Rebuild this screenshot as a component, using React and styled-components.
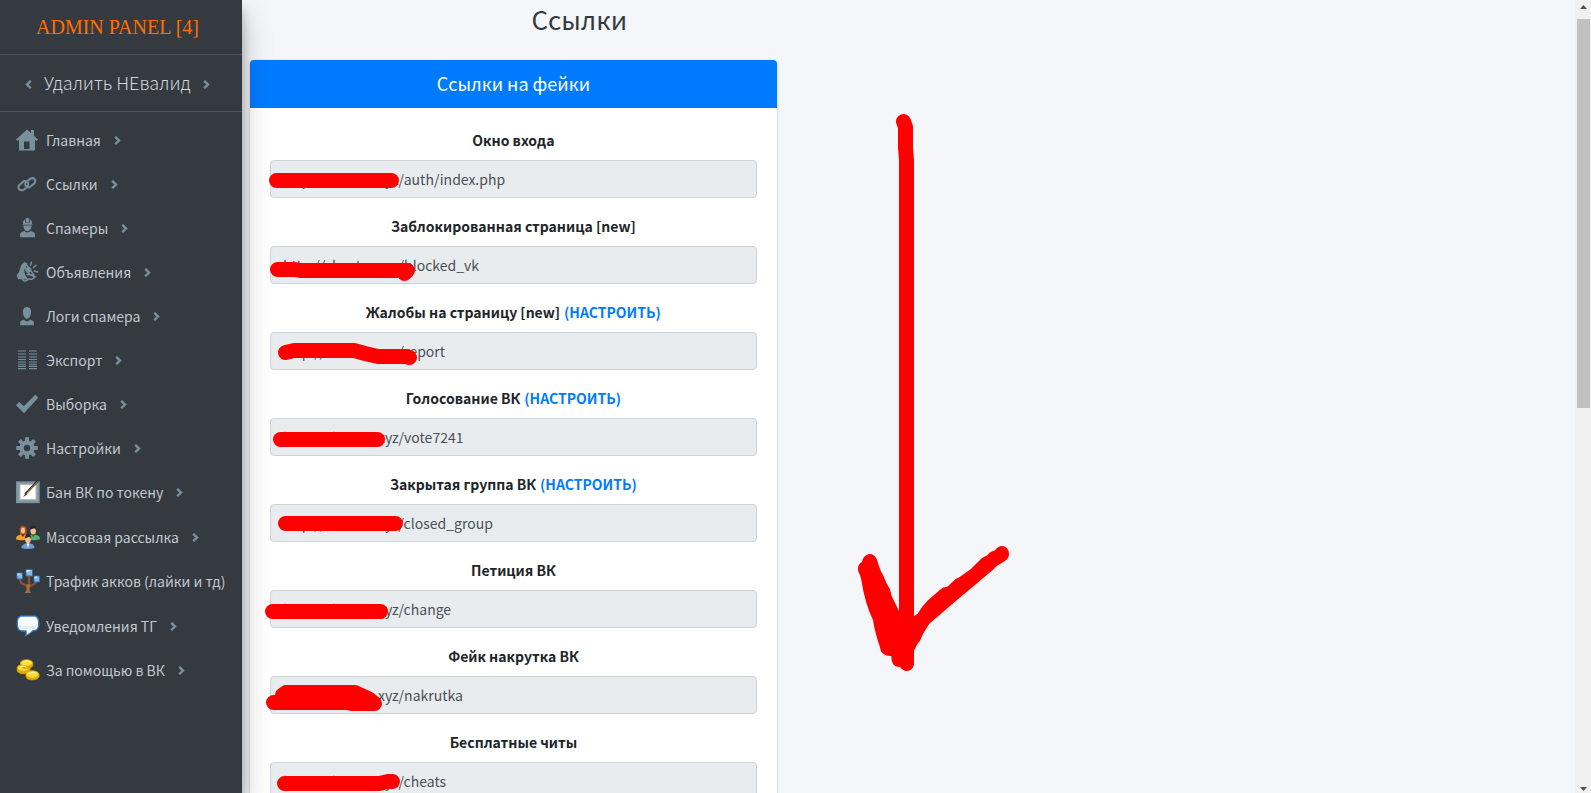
import React from 'react';
import styled, { createGlobalStyle } from 'styled-components';

const GlobalStyle = createGlobalStyle`
    * {
        box-sizing: border-box;
    }

    body {
        margin: 0;
        background-color: #f4f6f9;
        font-family: 'Noto Sans CJK SC', 'Open Sans', sans-serif;
        font-size: 14px;
        color: #212529;
    }
`;

const Page = styled.div`
    display: flex;
    height: 100vh;
    overflow: hidden;
    position: relative;
`;

const Sidebar = styled.aside`
    flex: 0 0 242px;
    background-color: #343a40;
    box-shadow: 0 14px 28px rgba(0,0,0,0.25), 0 10px 10px rgba(0,0,0,0.22);
    z-index: 2;
`;

const Brand = styled.a`
    display: flex;
    align-items: center;
    height: 55px;
    padding-left: 36px;
    border-bottom: 1px solid #4b545c;
    font-family: 'Liberation Serif', serif;
    font-size: 20px;
    color: #ff6f00;
    text-decoration: none;
`;

const CleanLink = styled.a`
    display: flex;
    align-items: center;
    gap: 12px;
    height: 57px;
    padding: 0 0 2px 25px;
    border-bottom: 1px solid #4b545c;
    font-size: 18px;
    font-weight: 300;
    color: #d0d4db;
    text-decoration: none;

    svg {
        margin-top: 4px;
    }
`;

const Menu = styled.ul`
    list-style: none;
    margin: 0;
    padding: 6px 0 0 16px;
`;

const MenuItem = styled.li`
    height: 44px;

    &:nth-child(n + 9):nth-child(odd) {
        height: 45px;
    }
`;

const MenuLink = styled.a`
    display: flex;
    align-items: center;
    height: 44px;
    color: #c2c7d0;
    text-decoration: none;
    white-space: nowrap;

    > svg:first-child {
        flex: none;
        width: ${props => props.$large ? '24px' : '22px'};
        height: ${props => props.$large ? '24px' : '22px'};
        margin-right: ${props => props.$large ? '6px' : '8px'};
    }
`;

const MenuText = styled.span`
    margin-right: 13px;
`;

const Chevron = styled.svg`
    flex: none;
    width: 7px;
    height: 9px;
    fill: none;
    stroke: #78909c;
    stroke-width: 2.4;
`;

const Content = styled.main`
    flex: 1;
    min-width: 0;
    padding: 0 8px;
`;

const Title = styled.h1`
    width: 50%;
    height: 60px;
    margin: 0;
    line-height: 38px;
    font-size: 26px;
    font-weight: 400;
    text-align: center;
    color: #343a40;
`;

const Card = styled.section`
    width: 40%;
    background-color: white;
    border-radius: 4px;
    box-shadow: 0 0 1px rgba(0,0,0,0.125), 0 1px 3px rgba(0,0,0,0.2);
`;

const CardHeader = styled.h2`
    margin: 0;
    height: 48px;
    line-height: 46px;
    border-radius: 4px 4px 0 0;
    background-color: #007bff;
    color: white;
    font-size: 18px;
    font-weight: 400;
    text-align: center;
`;

const CardBody = styled.form`
    padding: 20px;
`;

const Group = styled.div`
    margin-bottom: 16px;
`;

const GroupTitle = styled.div`
    display: flex;
    justify-content: center;
    gap: 4px;
    margin-bottom: 8px;
    line-height: 24px;
    font-weight: 700;

    a {
        color: #007bff;
        text-decoration: none;
    }
`;

const Field = styled.div`
    position: relative;
    height: 38px;
`;

const Input = styled.input`
    display: block;
    width: 100%;
    height: 38px;
    padding: 6px 12px;
    border: 1px solid #ced4da;
    border-radius: 4px;
    background-color: #e9ecef;
    color: #495057;
    font-family: inherit;
    font-size: 14px;
    outline: none;
`;

const Marker = styled.svg`
    position: absolute;
    top: 0;
    left: 0;
    overflow: visible;
    pointer-events: none;
    fill: none;
    stroke: #f00;
    stroke-width: 15;
    stroke-linecap: round;
    stroke-linejoin: round;
    z-index: 3;
`;

const ScrollTrack = styled.div`
    display: flex;
    flex-direction: column;
    justify-content: space-between;
    align-items: center;
    flex: 0 0 16px;
    background-color: #f1f1f1;

    svg {
        flex: none;
        display: block;
        width: 16px;
        height: 19px;
        fill: #505050;
    }
`;

const ScrollThumb = styled.div`
    width: 13px;
    height: 49%;
    margin-bottom: auto;
    background-color: #c1c1c1;
`;

const Right = () => (
    <Chevron viewBox="0 0 7 9"><path d="M1.2 .8L5 4.5L1.2 8.2" /></Chevron>
);

const Left = () => (
    <Chevron viewBox="0 0 7 9"><path d="M5.8 .8L2 4.5L5.8 8.2" /></Chevron>
);

const HomeIcon = () => (
    <svg viewBox="0 0 22 22" fill="#78909c">
        <path fillRule="evenodd" d="M11 .5L0 10.5L1.3 12L3 10.8V21.5H19V10.8L20.7 12L22 10.5L18 6.7V1H15V4ZM8 12.5H13.5V20H8Z" />
    </svg>
);

const LinkIcon = () => (
    <svg viewBox="0 0 22 22" fill="none" stroke="#78909c" strokeWidth="2" strokeLinecap="round">
        <path d="M10 15L7.8 16.6C4 18.8 .8 15 3.2 12.2L6.8 8.9C9.2 7 12.3 8.6 12.3 11.3C12.3 12.4 11.6 13.2 10.8 13.6" />
        <path d="M11.8 7.6L14.2 5.9C17.8 3.7 20.8 7.4 18.4 10.2L14.6 13.5C12.2 15.4 9 13.8 9.1 11.1C9.1 10 9.8 9.2 10.7 8.8" />
    </svg>
);

const WorkerIcon = () => (
    <svg viewBox="0 0 22 22" fill="#78909c">
        <path d="M9.8 1.5L11.5 .8L13.2 1.5V5H9.8ZM9 2.2V5.5H14V2.2C15.6 3.3 16.2 5 16 7H7C6.8 5 7.4 3.3 9 2.2ZM6.5 7.3H16.5V8.2H6.5ZM7.5 8.8H15.5C15.5 11.5 14 14.2 11.5 14.2S7.5 11.5 7.5 8.8ZM4 20.2V17.5C4 15.5 6 14.8 8.5 14C9.8 15.8 13.2 15.8 14.5 14C17 14.8 19 15.5 19 17.5V20.2Z" />
    </svg>
);

const BellIcon = () => (
    <svg viewBox="0 0 22 22" fill="none" stroke="#78909c" strokeWidth="1.4" strokeLinecap="round">
        <path fill="#78909c" d="M8.2 2C3.5 5 5.5 11.5 1.5 14.2L2.5 17.5L10 16.2C6.5 11.5 7.2 6.5 10.5 3Z" />
        <path d="M9.5 2.3C8.3 7.5 11 13.5 19 16L16 18.2L2.5 17.3M10 3L18.8 15.5M6.3 18.5C7.5 20.5 10.5 20.5 12 18.6" />
        <circle cx="12.5" cy="8.8" r="2.2" fill="#78909c" />
        <path d="M14.5 4.2L15.4 1.2M17.3 6.5L20 4.3M18.2 10L21.5 11" />
        <path d="M11 13.5L17.5 14.2" />
    </svg>
);

const UserIcon = () => (
    <svg viewBox="0 0 22 22" fill="#78909c">
        <path d="M11 2C14.5 2 15.3 5 15 8C14.7 11 13 13.8 11 13.8S7.3 11 7 8C6.7 5 7.5 2 11 2ZM4.2 20.3V17.8C4.2 15.5 6.3 15.5 8.2 14.5C9.6 17 12.4 17 13.8 14.5C15.7 15.5 17.9 15.5 17.9 17.8V20.3Z" />
    </svg>
);

const ColumnsIcon = () => (
    <svg viewBox="0 0 22 22" stroke="#78909c" strokeWidth="1.1">
        <path d="M2 2H10M2 5H10M2 8H10M2 10.5H10M2 13H10M2 15.2H10M2 17.4H10M2 19.6H10M13 2H21M13 5H21M13 8H21M13 10.5H21M13 13H21M13 15.2H21M13 17.4H21M13 19.6H21" />
    </svg>
);

const CheckIcon = () => (
    <svg viewBox="0 0 22 22" fill="#78909c">
        <path d="M0 12.2L3.2 9L7.8 13.2L19.2 1.8L22.2 4.8L8 20.2Z" />
    </svg>
);

const GearIcon = () => (
    <svg viewBox="0 0 22 22" fill="none" stroke="#78909c">
        <circle cx="11" cy="11" r="5.4" strokeWidth="4.4" />
        <path strokeWidth="4" d="M11 4V.3M11 18V21.7M4 11H.3M18 11H21.7M6 6L3.4 3.4M16 16L18.6 18.6M6 16L3.4 18.6M16 6L18.6 3.4" />
    </svg>
);

const TokenIcon = () => (
    <svg viewBox="0 0 24 24">
        <rect x=".7" y="2" width="22.3" height="20.5" fill="#8d9a9e" stroke="#6f91a6" strokeWidth="1.4" />
        <rect x="4" y="4.5" width="16" height="15" fill="#fff" stroke="#b9b9b9" />
        <path d="M21.8 1L9.2 14.2" stroke="#1c160d" strokeWidth="2" />
        <path d="M22 1.2L10 13.8" stroke="#d8a93b" strokeWidth=".9" />
        <path d="M10 12.6L7 17L11.3 14.5Z" fill="#54452c" />
    </svg>
);

const PeopleIcon = () => (
    <svg viewBox="0 0 24 24">
        <path d="M4 8C3 3 4 .8 7 .8S11 3 10.5 9L4 10Z" fill="#b75319" />
        <ellipse cx="7" cy="5.5" rx="2" ry="3" fill="#f5c28c" />
        <path d="M0 14.2C0 10.5 3 10.3 5 9.5L7 12L9 9.5C12 10 13 11.5 13 14.5C9 15.6 3 15.5 0 14.2Z" fill="#f0a51e" />
        <ellipse cx="17.2" cy="5.5" rx="2.8" ry="4" fill="#f3bf8d" />
        <path d="M14.2 4.5C14 1 16 .6 17.4 .8C20 .6 20.5 2.5 20.2 5L18.5 3.2Z" fill="#28221e" />
        <path d="M11.8 14.5C11.8 11 14.5 10.3 16 9.5L17.3 12L18.8 9.5C22 10.5 24 11 24 14.2C20 15.5 15 15.5 11.8 14.5Z" fill="#55b275" />
        <ellipse cx="12" cy="14.3" rx="2.8" ry="4" fill="#f6c08c" />
        <path d="M9 13.5C8.7 9.8 11 9.5 12 9.6C14.8 9.4 15.3 11.8 14.9 13.8L13.2 11.8Z" fill="#30251b" />
        <path d="M5.5 23C5.5 19.7 8.4 19 10.5 18.3L12 20.8L13.6 18.3C16.5 19 18.5 20 18.5 23C14 24.2 9 24.2 5.5 23Z" fill="#6f9ed5" />
        <path d="M10.5 18.3L12 23L13.5 18.3Z" fill="#fff" />
    </svg>
);

const TreeIcon = () => (
    <svg viewBox="0 0 24 24">
        <path d="M12 24V15M4 9C4 15 7 15.5 11.5 16.5M20 11.5C20 16 16 15.8 12.5 18M13 6V16" fill="none" stroke="#885436" strokeWidth="2.2" />
        <path d="M10.2 16L10.5 21L8.8 24H15L13.6 21L14.2 15Z" fill="#a96b43" />
        <path d="M1 4H6.5V10H1ZM10 .5H16.5V7H10ZM18 7H23.5V13H18Z" fill="#7eb9e8" stroke="#396ca2" />
        <path d="M1.5 4.5H5L1.5 7ZM10.5 1H15L10.5 4ZM18.5 7.5H22L18.5 10Z" fill="#cbe6fa" />
    </svg>
);

const ChatIcon = () => (
    <svg viewBox="0 0 24 24">
        <path d="M6 1.5H18C21.5 1.5 23.3 4 23.3 9.5C23.3 15 21.5 17 17 17.3C14.5 19.8 11.5 21.8 8.5 22.4C9.6 20.5 9.8 19 9.5 17.4H6C2.5 17.2 .7 15 .7 9.5C.7 4 2.5 1.5 6 1.5Z" fill="#3d86cf" />
        <path d="M6.5 2.8H17.5C20.7 2.8 22 5 22 9.5C22 14.2 20.5 16 16.4 16.2C14.5 18 12.8 19.4 10.8 20.4V16.2H6.5C3.3 16 2 14 2 9.5C2 5 3.3 2.8 6.5 2.8Z" fill="#fff" />
        <path d="M3 10C8 13 16 13 21 10C21 14 19 15.1 15.5 15.2H8C4.5 15.1 3 13.8 3 10Z" fill="#e0effb" />
    </svg>
);

const CoinsIcon = () => (
    <svg viewBox="0 0 24 24" fill="#ffdb36" stroke="#d39a00" strokeWidth=".8">
        <path d="M1.2 10V13C3 16.5 11 17 14 13V10Z" fill="#e9ae06" />
        <ellipse cx="7.6" cy="9.8" rx="6.4" ry="3.5" />
        <path d="M4.5 5V8C6 11.3 14 11.3 16.8 8V5Z" fill="#edb40b" />
        <ellipse cx="10.6" cy="5" rx="6.2" ry="3.3" />
        <path d="M10 16.6V19C11 22.8 21 23 23 19V16.6Z" fill="#e9ae06" />
        <ellipse cx="16.5" cy="16.5" rx="6.5" ry="3.8" />
        <path d="M7 4.4C9 2.8 12 2.8 14 4M4 9C6 7.8 8 8 10 8.8M12.5 15.8C15 14 18 14 20 15.2" fill="none" stroke="#fff6a5" strokeWidth="1.2" />
    </svg>
);

const menu = [
    { text: 'Главная', icon: HomeIcon },
    { text: 'Ссылки', icon: LinkIcon },
    { text: 'Спамеры', icon: WorkerIcon },
    { text: 'Объявления', icon: BellIcon },
    { text: 'Логи спамера', icon: UserIcon },
    { text: 'Экспорт', icon: ColumnsIcon },
    { text: 'Выборка', icon: CheckIcon },
    { text: 'Настройки', icon: GearIcon },
    { text: 'Бан ВК по токену', icon: TokenIcon, large: true },
    { text: 'Массовая рассылка', icon: PeopleIcon, large: true },
    { text: 'Трафик акков (лайки и тд)', icon: TreeIcon, large: true, last: true },
    { text: 'Уведомления ТГ', icon: ChatIcon, large: true },
    { text: 'За помощью в ВК', icon: CoinsIcon, large: true },
];

const host = 'http://cheatsx.xyz';

const fakes = [
    { id: 'auth', title: 'Окно входа', path: '/auth/index.php', mark: 'M6.5 20.5H121.5' },
    { id: 'blocked', title: 'Заблокированная страница [new]', path: '/blocked_vk', mark: 'M7.5 23.5H25L30 24.5H137.5L134.5 27.5' },
    { id: 'report', title: 'Жалобы на страницу [new]', setup: true, path: '/report', mark: 'M15.5 20.5L24 18.5H84L95 21.5L108 24.5H136L139.5 25.5' },
    { id: 'vote', title: 'Голосование ВК', setup: true, path: '/vote7241', mark: 'M10.5 21.5H107.5' },
    { id: 'closed', title: 'Закрытая группа ВК', setup: true, path: '/closed_group', mark: 'M15.5 19.5H125.5' },
    { id: 'change', title: 'Петиция ВК', path: '/change', mark: 'M2.5 21.5H110.5' },
    { id: 'nakrutka', title: 'Фейк накрутка ВК', path: '/nakrutka', mark: 'M3.5 26.5H78L82 27.5H104.5L99 23L85 16.5H16L12.5 19L20 24H90V19' },
    { id: 'cheats', title: 'Бесплатные читы', path: '/cheats', mark: 'M14.5 21.5H109L118 19.5H122.5' },
];

const App = () => {
    return (
        <Page>
            <GlobalStyle />
            <Sidebar>
                <Brand href="#">ADMIN PANEL [4]</Brand>
                <CleanLink href="#">
                    <Left />
                    Удалить НЕвалид
                    <Right />
                </CleanLink>
                <nav>
                    <Menu>
                        {menu.map(({ text, icon: Icon, large, last }) => (
                            <MenuItem key={text}>
                                <MenuLink href="#" $large={large}>
                                    <Icon />
                                    <MenuText>{text}</MenuText>
                                    {!last && <Right />}
                                </MenuLink>
                            </MenuItem>
                        ))}
                    </Menu>
                </nav>
            </Sidebar>

            <Content>
                <Title>Ссылки</Title>
                <Card>
                    <CardHeader>Ссылки на фейки</CardHeader>
                    <CardBody>
                        {fakes.map(fake => (
                            <Group key={fake.id}>
                                <GroupTitle>
                                    <label htmlFor={fake.id}>{fake.title}</label>
                                    {fake.setup && <a href="#">(НАСТРОИТЬ)</a>}
                                </GroupTitle>
                                <Field>
                                    <Input id={fake.id} type="text" readOnly value={host + fake.path} />
                                    <Marker width="145" height="38"><path d={fake.mark} /></Marker>
                                </Field>
                            </Group>
                        ))}
                    </CardBody>
                </Card>
            </Content>

            <ScrollTrack aria-hidden="true">
                <svg viewBox="0 0 16 19"><path d="M5 9L8.5 5L12 9Z" /></svg>
                <ScrollThumb />
                <svg viewBox="0 0 16 19"><path d="M5 13L8.5 17L12 13Z" /></svg>
            </ScrollTrack>

            <Marker width="1030" height="690">
                <path d="M903.5 121.5L905.5 127V148L906.5 160V663" />
                {/* arrow head */}
                <path
                    transform="translate(840 530) scale(0.3333)"
                    fill="#f00"
                    stroke="none"
                    d="M54 116C54 105 59 100 66 95C70 78 82 72 90 72C104 73 111 84 116 106L124 127L131 139L138 157L150 178L156 200L178 245H222V259L233 251Q245 230 264 211L302 178Q310 170 322 170L347 147L358 142L392 118L426 84L443 75Q450 64 463 63Q474 48 486 48C500 49 507 58 507 74Q506 85 495 93L471 107L458 120L388 179L350 211L268 281L250 310L240 332L232 342L222 362V400C220 416 212 423 200 423Q189 422 181 411C164 412 154 402 154 378C136 379 122 371 120 352Q104 305 99 270C82 235 71 195 64 150L60 135Q54 128 54 116Z"
                />
            </Marker>
        </Page>
    );
};

export default App;
